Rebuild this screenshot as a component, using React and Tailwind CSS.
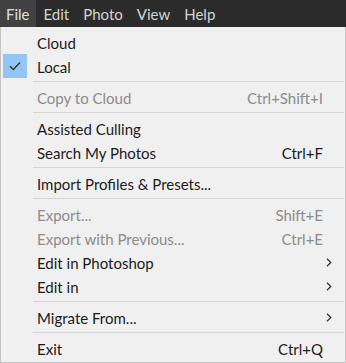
const items = [
  { label: 'Cloud' },
  { label: 'Local', checked: true },
  { sep: true },
  { label: 'Copy to Cloud', shortcut: 'Ctrl+Shift+I', disabled: true },
  { sep: true },
  { label: 'Assisted Culling' },
  { label: 'Search My Photos', shortcut: 'Ctrl+F' },
  { sep: true },
  { label: 'Import Profiles & Presets...' },
  { sep: true },
  { label: 'Export...', shortcut: 'Shift+E', disabled: true },
  { label: 'Export with Previous...', shortcut: 'Ctrl+E', disabled: true },
  { label: 'Edit in Photoshop', sub: true },
  { label: 'Edit in', sub: true },
  { sep: true },
  { label: 'Migrate From...', sub: true },
  { sep: true },
  { label: 'Exit', shortcut: 'Ctrl+Q' },
];

const menus = ['File', 'Edit', 'Photo', 'View', 'Help'];

export default function App() {
  return (
    <div className="w-[346px] h-[363px] bg-[#f0f0f0] font-['Lato',sans-serif] text-[15px]">
      {/* menu bar */}
      <div className="h-[27px] bg-[#2b2b2b] flex items-stretch text-[#d4d4d4] text-[15px]">
        {menus.map((m, i) => (
          <div
            key={m}
            className={`flex items-center px-[6px] pt-[1px] ${i === 0 ? 'bg-[#414141] text-[#e0e0e0]' : ''} ${i > 0 ? 'ml-[2px]' : ''}`}
          >
            {m}
          </div>
        ))}
      </div>

      {/* dropdown */}
      <div className="h-[336px] border border-t-0 border-[#c4c4c4] pt-[3px] flex flex-col">
        {items.map((it, i) =>
          it.sep ? (
            <div key={i} className="h-[7px] flex items-center pl-[32px] pr-[1px]">
              <div className="h-px w-full bg-[#d5d5d5]" />
            </div>
          ) : (
            <div
              key={i}
              className={`h-[24px] flex items-center ${it.disabled ? 'text-[#8c8c8c]' : 'text-[#1b1b1b]'}`}
            >
              <div className="w-[36px] h-full flex items-center pl-[2px]">
                {it.checked && (
                  <div className="w-[24px] h-[24px] bg-[#94c6f4] flex items-center justify-center">
                    <svg width="12" height="10" viewBox="0 0 12 10" fill="none">
                      <path d="M1 5.2 L4.3 8.4 L11 1.4" stroke="#333" strokeWidth="1.4" />
                    </svg>
                  </div>
                )}
              </div>
              <span className="flex-1 pt-[2px]">{it.label}</span>
              {it.shortcut && <span className="mr-[22px] pt-[2px]">{it.shortcut}</span>}
              {it.sub && (
                <svg width="6" height="9" viewBox="0 0 6 9" fill="none" className="mr-[13px]">
                  <path d="M1 0.8 L4.8 4.5 L1 8.2" stroke="#333" strokeWidth="1.2" />
                </svg>
              )}
            </div>
          )
        )}
      </div>
    </div>
  );
}
